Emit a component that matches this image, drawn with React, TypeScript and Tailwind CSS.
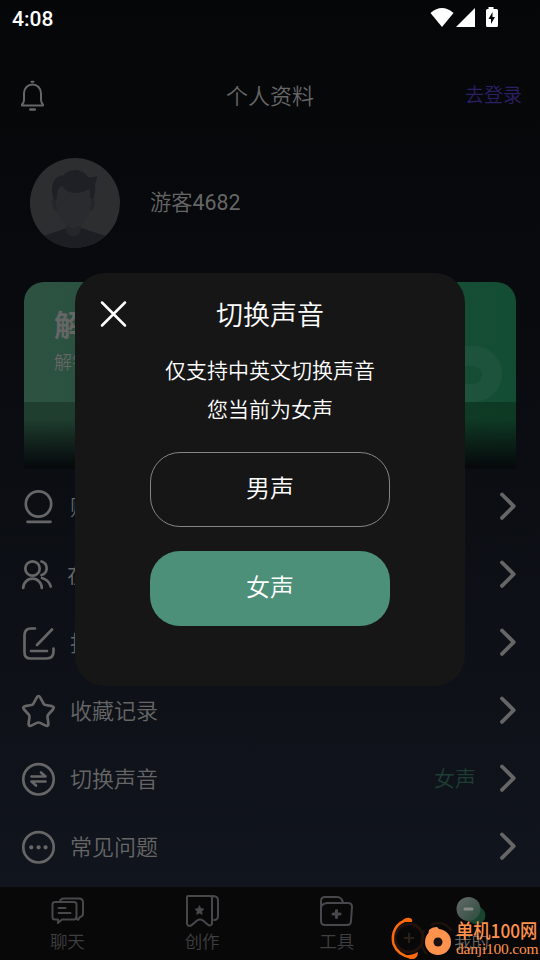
import type { ReactNode } from "react";

const iconProps = {
  fill: "none",
  stroke: "currentColor",
  strokeLinecap: "round" as const,
  strokeLinejoin: "round" as const,
};

function StatusBar() {
  return (
    <div className="flex h-[38px] shrink-0 items-start justify-between pl-3 pr-[42px] text-white">
      <span className="mt-[3px] text-[21px] leading-8 font-medium">4:08</span>
      <svg width="70" height="24" viewBox="0 0 70 24" className="mt-[5px]" fill="currentColor">
        <path d="M2.500 8Q14-2 25.500 8L14 22Z" />
        <path d="M47 3V22H28Z" />
        <path
          fillRule="evenodd"
          d="M60.500 2h5v2h3q1.500 0 1.500 1.500v15q0 1.500-1.500 1.500h-9q-1.500 0-1.500-1.500v-15q0-1.500 1.500-1.500h1zM64.500 7l-4 7h2.500v5l4-7h-2.500z"
        />
      </svg>
    </div>
  );
}

function Header() {
  return (
    <div className="grid h-[116px] shrink-0 grid-cols-3 items-center px-[18px]">
      <svg {...iconProps} width="30" height="32" viewBox="0 0 30 32" strokeWidth="2" className="text-[#666]">
        <path d="M13.500 1.800h2" />
        <path d="M6 20V13a8.500 8.500 0 0 1 17 0v7q0 2.500 2 4.500v1H4v-1q2-2 2-4.500z" />
        <path d="M12.300 29.500h4.500" strokeWidth="2.500" />
      </svg>
      <h1 className="pt-[2px] text-center text-[22px] leading-8 font-[350] text-[#666]">个人资料</h1>
      <span className="text-right text-[19px] leading-8 font-[350] text-[#2c1f66]">去登录</span>
    </div>
  );
}

function Profile() {
  return (
    <div className="mt-1 flex h-[90px] shrink-0 items-center gap-[30px] pl-[30px]">
      <svg width="90" height="90" viewBox="0 0 90 90" className="rounded-full">
        <rect width="90" height="90" fill="#2d2e2f" />
        <path d="M14 78L37 70h14l25 8 14 6v6H0v-6z" fill="#1d1e23" />
        <path d="M36 68h15v3a7.500 7.500 0 0 1-15 0z" fill="#25262a" />
        <path d="M26 41q-4-1-4 4t5 9zM61 41q4-1 4 4t-5 9z" fill="#25262a" />
        <path d="M27 28h33v22q-1 13-11 18-5 4-11 0Q28 62 27 50z" fill="#2a2b2f" />
        <path d="M33 17q-11 2-11 15 0 6 2 10l3-1q-1-11 5-13z" fill="#1f2025" />
        <path
          d="M31 23q3-11 14-11 9 0 13 7 5 1 9-1 0 5-2 8 1 8-2 15l-3-1q1-6-1-9-6 4-14 4-13-1-14-12z"
          fill="#1f2025"
        />
      </svg>
      <span className="text-[21.3px] leading-8 text-[#666]">
        <span className="font-[350]">游客</span>4682
      </span>
    </div>
  );
}

function Banner() {
  return (
    <div className="mx-6 mt-[34px] h-[187px] shrink-0 overflow-hidden rounded-t-[20px]">
      <div className="flex h-[120px] justify-between bg-linear-to-r from-[#2d5242] to-[#124d33]">
        <div className="pt-[23px] pl-[30px] text-[#666]">
          <p className="text-[30px] leading-[42px] font-bold">解锁会员</p>
          <p className="mt-[3px] text-[18px] leading-[26px] font-[350]">解锁全部功能</p>
        </div>
        <svg width="100" height="120" viewBox="0 0 100 120">
          <path
            d="M20 64h38a28 28 0 0 1 0 56H20zM48 84v18h9a9 9 0 0 0 0-18z"
            fill="#1d533c"
            fillRule="evenodd"
          />
        </svg>
      </div>
      <div className="h-[67px] bg-linear-to-r from-[#203e30] to-[#0d3a24]">
        <div className="h-full bg-linear-to-b from-transparent from-25% via-[#080f0f]/50 via-55% to-[#060a0c] to-95%" />
      </div>
    </div>
  );
}

const menu: { label: string; value?: string; tight?: boolean; icon: ReactNode }[] = [
  {
    label: "购买记录",
    icon: (
      <>
        <circle cx="17.500" cy="15" r="12.700" />
        <path d="M6.500 32.800h23" />
      </>
    ),
  },
  {
    label: "在线客服",
    tight: true,
    icon: (
      <>
        <circle cx="11.500" cy="11.500" r="7.200" />
        <path d="M2.200 31a9.300 9.300 0 0 1 18.600 0M20.500 4.500a7 7 0 0 1 0 13.500M21 21q7 2 8.700 8.500" />
      </>
    ),
  },
  {
    label: "投诉建议",
    icon: (
      <path d="M14 3.500H10Q3.500 3.500 3.500 10.500v17q0 6 6 6h16q7 0 7-7v-3M31 4.500L16 20M10 26h16" />
    ),
  },
  {
    label: "收藏记录",
    icon: (
      <path d="M15.700 4.600q1.800-3.200 3.600 0l3.300 6q.6 1.200 2 1.400l6.300 1.200q3.100.8 1 3.300l-4.600 5q-1 1-.8 2.500l.9 6.500q.1 3.200-2.700 2.100l-5.500-2.700q-1.700-.8-3.400 0l-5.500 2.700q-2.800 1.100-2.700-2.100l.9-6.500q.2-1.500-.8-2.500l-4.600-5q-2.100-2.500 1-3.300L10.400 12q1.400-.2 2-1.400z" />
    ),
  },
  {
    label: "切换声音",
    value: "女声",
    icon: (
      <>
        <circle cx="17.500" cy="18.300" r="15.200" />
        <path d="M10.500 15.500h14l-4.500-4M24.500 20.500h-14l4.500 4" />
      </>
    ),
  },
  {
    label: "常见问题",
    icon: (
      <>
        <circle cx="17.500" cy="18.300" r="15.200" />
        <path d="M10.200 18.300h.1M17.500 18.300h.1M24.500 18.300h.1" strokeWidth="4.200" />
      </>
    ),
  },
];

function Menu() {
  return (
    <div className="mt-[3px] flex flex-col text-[#666]">
      {menu.map((item) => (
        <div key={item.label} className="flex h-[68px] items-center pr-6 pl-[21px]">
          <svg {...iconProps} width="36" height="38" viewBox="0 0 36 38" strokeWidth="2.700" className="mt-[3px]">
            {item.icon}
          </svg>
          <span
            className={`pt-[3px] text-[22px] leading-8 font-[350] ${item.tight ? "ml-[10px]" : "ml-[13px]"}`}
          >
            {item.label}
          </span>
          {item.value && (
            <span className="ml-auto pt-px text-[21px] leading-8 font-[350] text-[#1e3e33]">
              {item.value}
            </span>
          )}
          <svg
            {...iconProps}
            width="16"
            height="28"
            viewBox="0 0 16 28"
            strokeWidth="3.800"
            className={item.value ? "ml-6" : "ml-auto"}
          >
            <path d="M2 2.500L13.700 14.200 2 25.900" />
          </svg>
        </div>
      ))}
    </div>
  );
}

const tabs: { label: string; icon: ReactNode }[] = [
  {
    label: "聊天",
    icon: (
      <>
        <path d="M10 7q0-3.500 4-3.500h15q4 0 4 4v11q0 3-3 3.500l-2 3-2-2.500" />
        <path d="M5 7h19q2.500 0 2.500 2.500V22q0 2.500-2.500 2.500H12L8 28v-3.500H5Q2.500 24.500 2.500 22V9.500Q2.500 7 5 7zM8.500 13h7M8.500 18h12" />
      </>
    ),
  },
  {
    label: "创作",
    icon: (
      <>
        <path d="M3 1h22q2 0 2 2v26q-2 3-5 0l-4-3.500q-3-2-6 0L8 29q-4 4-6 0V2q0-1 1-1zM27 1q6 0 6 4v16q0 4-4 4" />
        <path
          d="M14.500 11l1.300 2.700 3 .4-2.200 2.200.5 3-2.600-1.400-2.700 1.400.5-3-2.100-2.200 3-.4z"
          fill="currentColor"
          strokeWidth="1"
        />
      </>
    ),
  },
  {
    label: "工具",
    icon: (
      <>
        <path d="M2 12V6q0-4 4-4h12q5 0 6 6" />
        <path d="M8 8h21q4 0 4 4l-1 14q0 4-4 4H6q-4 0-4-4V13q0-4 6-5z" />
        <path d="M17.500 15.500v7M14 19h7" strokeWidth="3" />
      </>
    ),
  },
];

function TabBar() {
  return (
    <div className="mt-auto grid h-[73px] shrink-0 grid-cols-4 bg-[#080808] pr-px font-[350] text-[#3f3f41]">
      {tabs.map((tab) => (
        <div key={tab.label} className="flex flex-col items-center pt-2">
          <svg {...iconProps} width="35" height="32" viewBox="0 0 35 32" strokeWidth="2" className="text-[#47474c]">
            {tab.icon}
          </svg>
          <span className="mt-[3px] text-[17.5px] leading-6">{tab.label}</span>
        </div>
      ))}
      <div className="flex flex-col items-center pt-2">
        <svg width="35" height="32" viewBox="0 0 35 32">
          <defs>
            <linearGradient id="mineHead" x1="0" y1="0" x2="1" y2="1">
              <stop offset="0" stopColor="#656a68" />
              <stop offset="1" stopColor="#2a4b3e" />
            </linearGradient>
          </defs>
          <circle cx="22.500" cy="20.500" r="9" fill="#17432f" />
          <circle cx="14.500" cy="14" r="12" fill="url(#mineHead)" />
          <path d="M11 14h7" stroke="#868988" strokeWidth="3" strokeLinecap="round" />
        </svg>
        <span className="mt-[3px] text-[17.5px] leading-6 text-[#666]">我的</span>
      </div>
    </div>
  );
}

function VoiceDialog() {
  return (
    <div className="absolute inset-x-[75px] top-[273px] flex h-[413px] flex-col items-center rounded-[30px] bg-[#161616] font-[350] text-white">
      <div className="grid h-[82px] w-full grid-cols-[1fr_auto_1fr] items-center px-[25px]">
        <svg {...iconProps} width="28" height="28" viewBox="0 0 28 28" strokeWidth="2.500">
          <path d="M2 2.500l23 23M25 2.500l-23 23" />
        </svg>
        <h2 className="pt-[3px] text-[27px] leading-10">切换声音</h2>
      </div>
      <div className="-mt-[3px] text-center text-[21px] leading-[39px]">
        <p>仅支持中英文切换声音</p>
        <p>您当前为女声</p>
      </div>
      <button className="mt-[22px] h-[75px] w-60 rounded-[30px] border border-[#858585] pb-[2px] text-2xl">
        男声
      </button>
      <button className="mt-6 h-[75px] w-60 rounded-[30px] bg-[#4d9079] pb-[2px] text-2xl">
        女声
      </button>
    </div>
  );
}

function Watermark() {
  return (
    <div className="absolute right-0 bottom-0 flex h-[44px] items-start">
      <svg width="66" height="44" viewBox="0 0 66 44" fill="none">
        <circle cx="19" cy="22" r="14" stroke="#21120d" strokeWidth="3" />
        <path d="M19 17v10M14 22h10" stroke="#2b1f1a" strokeWidth="2" />
        <path d="M34 14q-6 16 3 24M41 9q12-6 21 6" stroke="#21120d" strokeWidth="2" />
        <path
          d="M18 4C6 6 1 17 3.500 28q4 11 17.500 13.500"
          stroke="#fb6a0c"
          strokeWidth="2.500"
          strokeLinecap="round"
        />
        <path d="M11 6q4-5 9-4 3 1 2 4zM14 39q6 1 14-3 0 8-8 7z" fill="#fb6a0c" />
        <circle cx="48" cy="26" r="13" fill="#ff924d" />
        <path d="M38 20l1-6q3-3 8-3l4 4z" fill="#ff924d" />
        <circle cx="48" cy="26" r="4.500" fill="#1c1310" />
      </svg>
      <div className="mt-[3px] w-[84px] whitespace-nowrap text-[#ff914d]">
        <p className="scale-y-110 font-['Noto_Sans_CJK_SC',sans-serif] text-[17.3px] leading-[22px] font-medium">
          单机100网
        </p>
        <p className="font-['Liberation_Serif',serif] text-[15.5px] leading-4 tracking-[-0.2px]">
          danji100.com
        </p>
      </div>
    </div>
  );
}

export default function App() {
  return (
    <div className="relative flex h-[960px] w-[540px] flex-col overflow-hidden bg-linear-to-b from-[#050607] to-[#12161f] font-[Roboto,'Noto_Sans_CJK_SC',sans-serif]">
      <StatusBar />
      <Header />
      <Profile />
      <Banner />
      <Menu />
      <TabBar />
      <VoiceDialog />
      <Watermark />
    </div>
  );
}
